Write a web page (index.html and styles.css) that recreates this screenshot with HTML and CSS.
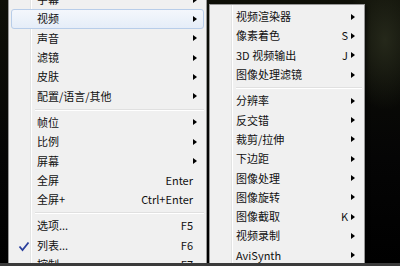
FILE: index.html
```
<html>
	<head>
<link rel="stylesheet" href="styles.css">
	</head>
	<body>
		<div class="screen">
			<div class="menu main">
				<div class="item"><span class="label">字幕</span><span class="key"></span><span class="arrow"></span></div>
				<div class="item active"><span class="label">视频</span><span class="key"></span><span class="arrow"></span></div>
				<div class="item"><span class="label">声音</span><span class="key"></span><span class="arrow"></span></div>
				<div class="item"><span class="label">滤镜</span><span class="key"></span><span class="arrow"></span></div>
				<div class="item"><span class="label">皮肤</span><span class="key"></span><span class="arrow"></span></div>
				<div class="item"><span class="label">配置/语言/其他</span><span class="key"></span><span class="arrow"></span></div>
				<div class="sep"></div>
				<div class="item"><span class="label">帧位</span><span class="key"></span><span class="arrow"></span></div>
				<div class="item"><span class="label">比例</span><span class="key"></span><span class="arrow"></span></div>
				<div class="item"><span class="label">屏幕</span><span class="key"></span><span class="arrow"></span></div>
				<div class="item"><span class="label">全屏</span><span class="key">Enter</span><span></span></div>
				<div class="item"><span class="label">全屏+</span><span class="key">Ctrl+Enter</span><span></span></div>
				<div class="sep"></div>
				<div class="item"><span class="label">选项...</span><span class="key">F5</span><span></span></div>
				<div class="item checked">
					<svg class="check" width="12" height="11" viewBox="0 0 12 11"><path d="M1.5 5.5 L4.5 9 L10.5 1.5" fill="none" stroke="#2a3f9c" stroke-width="1.8"/></svg>
					<span class="label">列表...</span><span class="key">F6</span><span></span>
				</div>
				<div class="item"><span class="label">控制</span><span class="key">F7</span><span></span></div>
			</div>

			<div class="menu sub">
				<div class="item"><span class="label">视频渲染器</span><span class="key"></span><span class="arrow"></span></div>
				<div class="item"><span class="label">像素着色</span><span class="key">S</span><span class="arrow"></span></div>
				<div class="item"><span class="label">3D 视频输出</span><span class="key">J</span><span class="arrow"></span></div>
				<div class="item"><span class="label">图像处理滤镜</span><span class="key"></span><span class="arrow"></span></div>
				<div class="sep"></div>
				<div class="item"><span class="label">分辨率</span><span class="key"></span><span class="arrow"></span></div>
				<div class="item"><span class="label">反交错</span><span class="key"></span><span class="arrow"></span></div>
				<div class="item"><span class="label">裁剪/拉伸</span><span class="key"></span><span class="arrow"></span></div>
				<div class="item"><span class="label">下边距</span><span class="key"></span><span class="arrow"></span></div>
				<div class="item"><span class="label">图像处理</span><span class="key"></span><span class="arrow"></span></div>
				<div class="item"><span class="label">图像旋转</span><span class="key"></span><span class="arrow"></span></div>
				<div class="item"><span class="label">图像截取</span><span class="key">K</span><span class="arrow"></span></div>
				<div class="item"><span class="label">视频录制</span><span class="key"></span><span class="arrow"></span></div>
				<div class="item"><span class="label">AviSynth</span><span class="key"></span><span class="arrow"></span></div>
			</div>
		</div>
		<div class="frame-bottom"></div>
	</body>
</html>
```

FILE: styles.css
```
body {
    margin: 0;
    width: 400px;
    height: 266px;
    overflow: hidden;
    background: #000;
    font-family: "Noto Sans CJK SC", "Noto Sans", sans-serif;
    font-size: 11px;
    color: #111;
}

.screen {
    display: flex;
    align-items: flex-start;
    height: 263px;
    overflow: hidden;
    padding-left: 8px;
    background:
        radial-gradient(ellipse 40px 70px at 385px 40px, #25281a, transparent),
        linear-gradient(#0f1008, #050505 60%, #000);
}

.frame-bottom {
    height: 3px;
    background: #3b3b3b;
}

.menu {
    flex: none;
    box-sizing: border-box;
    border: 1px solid #979797;
    padding: 2px;
    background:
        linear-gradient(to right, transparent 21px, #e2e3e3 21px, #e2e3e3 22px, #fff 22px, #fff 23px, transparent 23px),
        #f0f0f0;
}

.main {
    width: 199px;
    margin-top: -13px;
}

.sub {
    width: 156px;
    margin-top: 4px;
    margin-left: 2px;
    box-shadow: 2px 2px 3px rgba(0, 0, 0, 0.5);
}

.item {
    position: relative;
    display: grid;
    grid-template-columns: 1fr auto 14px;
    align-items: center;
    height: 19.3px;
    padding-left: 23px;
    padding-right: 1px;
    box-sizing: border-box;
    border: 1px solid transparent;
    border-radius: 3px;
    white-space: nowrap;
    line-height: 1;
}

.main .item {
    padding-left: 25px;
}

.active {
    border-color: #b8cde9;
    background: linear-gradient(#f4f7fc, #e5edf8);
}

.key {
    text-align: right;
    margin-right: -2px;
}

.main .key {
    margin-right: -5px;
}

.arrow {
    justify-self: center;
    width: 0;
    height: 0;
    border-top: 3.5px solid transparent;
    border-bottom: 3.5px solid transparent;
    border-left: 4px solid #000;
}

.check {
    position: absolute;
    left: 6px;
    top: 4px;
}

.sep {
    height: 7px;
    margin-left: 24px;
    background: linear-gradient(transparent 3px, #e0e0e0 3px, #e0e0e0 4px, #fff 4px, #fff 5px, transparent 5px);
}
```
